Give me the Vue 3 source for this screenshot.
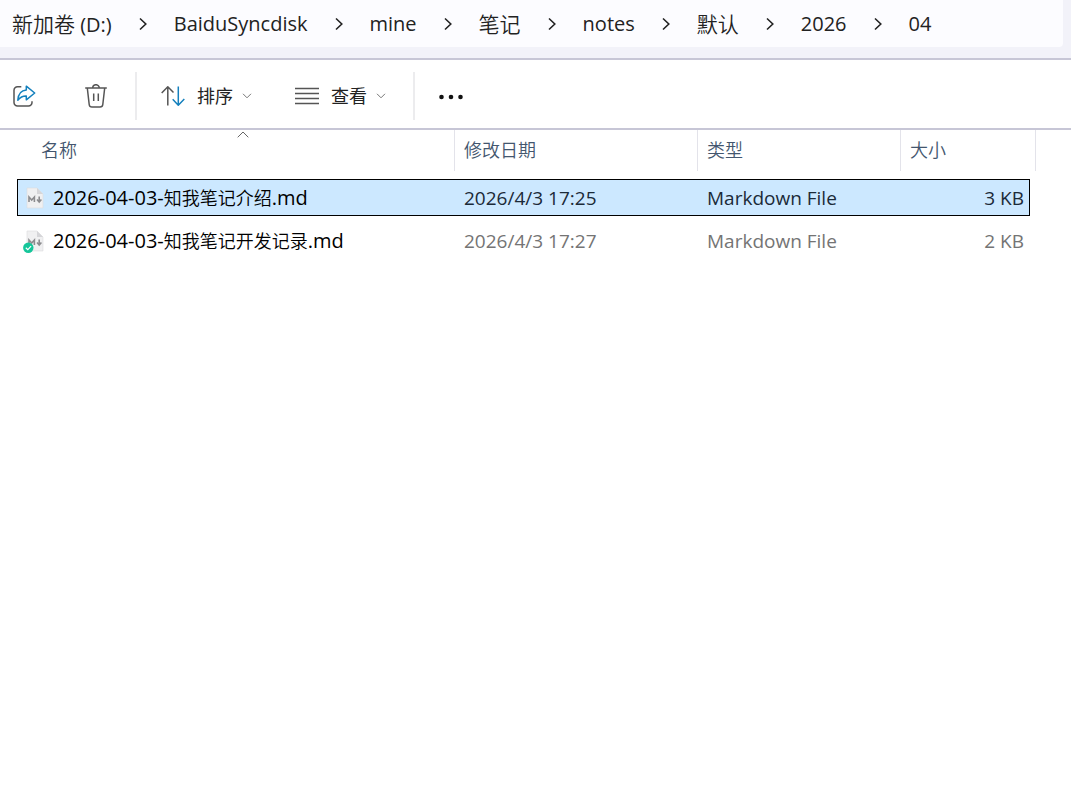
<template>
  <div class="explorer">
    <header class="address">
      <nav class="address-box" aria-label="路径">
        <ol class="crumbs">
          <li v-for="(crumb, index) in crumbs" :key="crumb" class="crumb">
            <svg v-if="index > 0" class="crumb-arrow" viewBox="0 0 8 14" aria-hidden="true">
              <path d="M1 1.5 6.8 7 1 12.5" />
            </svg>
            <a href="#" class="crumb-link">
              <span v-for="(part, i) in splitText(crumb)" :key="i" :class="{ han: part.han }">{{ part.text }}</span>
            </a>
          </li>
        </ol>
      </nav>
    </header>

    <div class="toolbar">
      <div class="group">
        <button class="tool" aria-label="共享">
          <svg class="icon" viewBox="0 0 24 24">
            <path class="stroke" d="M9.3 2.8H5.5A3.5 3.5 0 0 0 2 6.3V18.5A3.5 3.5 0 0 0 5.5 22H16.5A3.5 3.5 0 0 0 20 18.5V17.3" />
            <path class="stroke blue" d="M14.3 2.2 22.7 9 14.3 15.8V12C10.5 11.8 8.3 13.2 5.8 16.2 6.3 10.3 9 6.5 14.3 6.1Z" />
          </svg>
        </button>
        <button class="tool" aria-label="删除">
          <svg class="icon" viewBox="0 0 24 24">
            <path class="stroke" d="M1.2 4H22.8M8.7 4A3.3 3.3 0 0 1 15.3 4M3.3 4 5.2 20.5A2.8 2.8 0 0 0 8 23H16A2.8 2.8 0 0 0 18.8 20.5L20.7 4M9.7 9.5V17M14.3 9.5V17" />
          </svg>
        </button>
      </div>
      <span class="divider"></span>
      <div class="group group--menus">
        <button class="tool">
          <svg class="icon" viewBox="0 0 24 24">
            <path class="stroke" d="M6.8 21.5V3M.7 9 6.8 2.7 12.5 8.5" />
            <path class="stroke blue" d="M17.3 2.5V21M11.7 15.2 17.3 21.2 23.3 15" />
          </svg>
          <span class="tool-label">排序</span>
          <svg class="caret" viewBox="0 0 10 6"><path d="M1 .8 5 4.8 9 .8" /></svg>
        </button>
        <button class="tool">
          <svg class="icon" viewBox="0 0 24 24">
            <path class="stroke" d="M0 4.5H24M0 9.5H24M0 14.5H24M0 19.5H24" />
          </svg>
          <span class="tool-label">查看</span>
          <svg class="caret" viewBox="0 0 10 6"><path d="M1 .8 5 4.8 9 .8" /></svg>
        </button>
      </div>
      <span class="divider"></span>
      <button class="tool" aria-label="更多">
        <svg class="icon dots" viewBox="0 0 24 24">
          <circle cx="2.5" cy="13" r="2.3" />
          <circle cx="12" cy="13" r="2.3" />
          <circle cx="21.5" cy="13" r="2.3" />
        </svg>
      </button>
    </div>

    <main class="content">
      <table class="files">
        <colgroup>
          <col>
          <col class="col-date">
          <col class="col-type">
          <col class="col-size">
          <col class="col-end">
        </colgroup>
        <thead>
          <tr>
            <th class="first">
              <button class="head">
                <svg class="sorted" viewBox="0 0 12 7"><path d="M.7 6.3 6 1 11.3 6.3" /></svg>
                名称
              </button>
            </th>
            <th><button class="head">修改日期</button></th>
            <th><button class="head">类型</button></th>
            <th colspan="2"><button class="head">大小</button></th>
          </tr>
        </thead>
        <tbody>
          <tr
            v-for="file in files"
            :key="file.name"
            :class="{ selected: file.name === selected }"
            @click="selected = file.name"
          >
            <td class="name">
              <div class="name-inner">
                <svg class="file-icon" viewBox="0 0 24 24" aria-hidden="true">
                  <path class="page" d="M4 2H14L20 8V22H4Z" />
                  <path class="fold" d="M14 2V8H20Z" />
                  <path class="mark" d="M6 16V11L8.7 14 11.4 11V16M16.2 10.5V15.500M14 13.5 16.2 16 18.4 13.5" />
                  <g v-if="file.synced">
                    <circle class="badge" cx="5.3" cy="18.7" r="5.2" />
                    <path class="tick" d="M2.8 18.7 4.8 20.6 8.1 17.1" />
                  </g>
                </svg>
                <span class="name-text">
                  <span v-for="(part, i) in splitText(file.name)" :key="i" :class="{ han: part.han }">{{ part.text }}</span>
                </span>
              </div>
            </td>
            <td>{{ file.date }}</td>
            <td>{{ file.type }}</td>
            <td class="size">{{ file.size }}</td>
            <td class="end"></td>
          </tr>
        </tbody>
      </table>
    </main>
  </div>
</template>

<script setup>
import { ref } from 'vue'

const crumbs = ['新加卷 (D:)', 'BaiduSyncdisk', 'mine', '笔记', 'notes', '默认', '2026', '04']

const files = [
  { name: '2026-04-03-知我笔记介绍.md', date: '2026/4/3 17:25', type: 'Markdown File', size: '3 KB', synced: false },
  { name: '2026-04-03-知我笔记开发记录.md', date: '2026/4/3 17:27', type: 'Markdown File', size: '2 KB', synced: true }
]

const selected = ref(files[0].name)

// Chinese and Latin runs have their own text size
const splitText = (text) =>
  text
    .split(/([\u4e00-\u9fff]+)/)
    .filter(Boolean)
    .map((part) => ({ text: part, han: /[\u4e00-\u9fff]/.test(part) }))
</script>

<style>
body {
  background: #fff;
}
</style>

<style scoped>
.explorer {
  font-family: 'Open Sans', 'Noto Sans CJK SC', sans-serif;
  font-size: 19px;
  color: #222;
}

button {
  font: inherit;
  color: inherit;
  background: none;
  border: 0;
  padding: 0;
}

svg {
  flex: none;
  fill: none;
}

.han {
  font-family: 'Noto Sans CJK SC', sans-serif;
  font-weight: 350;
}

.address {
  height: 58px;
  padding-right: 8px;
  background: #f2f2f9;
  border-bottom: 2px solid #c7c6d6;
}

.address-box {
  height: 47px;
  padding-left: 12px;
  display: flex;
  align-items: center;
  background: #fcfcff;
  border-radius: 0 0 4px 0;
}

.crumbs {
  display: flex;
  margin: 0;
  padding: 0;
  list-style: none;
  font-size: 20px;
  line-height: 30px;
}

.crumb {
  display: flex;
  align-items: center;
  white-space: nowrap;
}

.crumb .han {
  font-size: 21px;
}

.crumb-link {
  color: inherit;
  text-decoration: none;
}

.crumb-arrow {
  width: 8px;
  height: 14px;
  margin: 0 27px;
  stroke: #222;
  stroke-width: 1.6;
}

.toolbar {
  height: 64px;
  padding-top: 4px;
  display: flex;
  align-items: center;
  gap: 12px;
  border-bottom: 2px solid #c7c6d6;
}

.group {
  display: flex;
  gap: 24px;
  padding-right: 3px;
}

.group--menus {
  gap: 19px;
}

.tool {
  height: 48px;
  padding: 0 12px;
  display: flex;
  align-items: center;
}

.icon {
  width: 24px;
  height: 24px;
}

.stroke {
  stroke: #555;
  stroke-width: 1.5;
  stroke-linejoin: round;
}

.blue {
  stroke: #1480bd;
}

.dots {
  fill: #111;
}

.tool-label {
  margin: 0 9px 0 12px;
  font-size: 18px;
  line-height: 26px;
}

.caret {
  width: 10px;
  height: 6px;
  stroke: #777;
}

.divider {
  width: 2px;
  height: 48px;
  background: #ececee;
}

.content {
  padding: 0 35px 0 17px;
}

.files {
  width: 100%;
  table-layout: fixed;
  border-collapse: separate;
  border-spacing: 0;
  white-space: nowrap;
}

.col-date {
  width: 243px;
}

.col-type {
  width: 203px;
}

.col-size {
  width: 129px;
}

.col-end {
  width: 6px;
}

th {
  padding: 0 0 8px;
  font-weight: 400;
}

.first {
  padding-left: 15px;
}

.head {
  position: relative;
  display: block;
  width: 100%;
  height: 41px;
  padding: 0 9px 3px;
  font-family: 'Noto Sans CJK SC', sans-serif;
  font-size: 18px;
  font-weight: 350;
  line-height: 26px;
  text-align: left;
  color: #43566e;
  border-right: 1px solid #e3e3ea;
}

.sorted {
  position: absolute;
  top: 1px;
  left: 50%;
  width: 12px;
  height: 7px;
  transform: translateX(-50%);
  stroke: #666;
}

td {
  height: 35px;
  padding: 0 9px;
  line-height: 26px;
  color: #747474;
  border: 0 solid transparent;
  border-width: 1px 0;
}

tr + tr td {
  border-top-width: 7px;
}

.name {
  padding: 0 0 0 5px;
  color: #000;
  border-left-width: 1px;
}

.name-inner {
  display: flex;
  align-items: center;
  gap: 6px;
}

.name-text {
  font-size: 20px;
}

.name-text .han {
  font-size: 18px;
}

.size {
  padding: 0 5px;
  text-align: right;
  border-right-width: 1px;
}

.end {
  padding: 0;
}

.selected td:not(.end) {
  background: #cce8ff;
  border-color: #000;
}

.selected td:not(.name) {
  color: #1b2a38;
}

.file-icon {
  width: 24px;
  height: 24px;
}

.page {
  fill: #f0f0f1;
  stroke: #dcdcde;
  stroke-width: 0.6;
}

.fold {
  fill: #d5d5d8;
}

.mark {
  stroke: #8c8c8f;
  stroke-width: 1.6;
}

.badge {
  fill: #15c69a;
}

.tick {
  stroke: #fff;
  stroke-width: 1.2;
}
</style>
